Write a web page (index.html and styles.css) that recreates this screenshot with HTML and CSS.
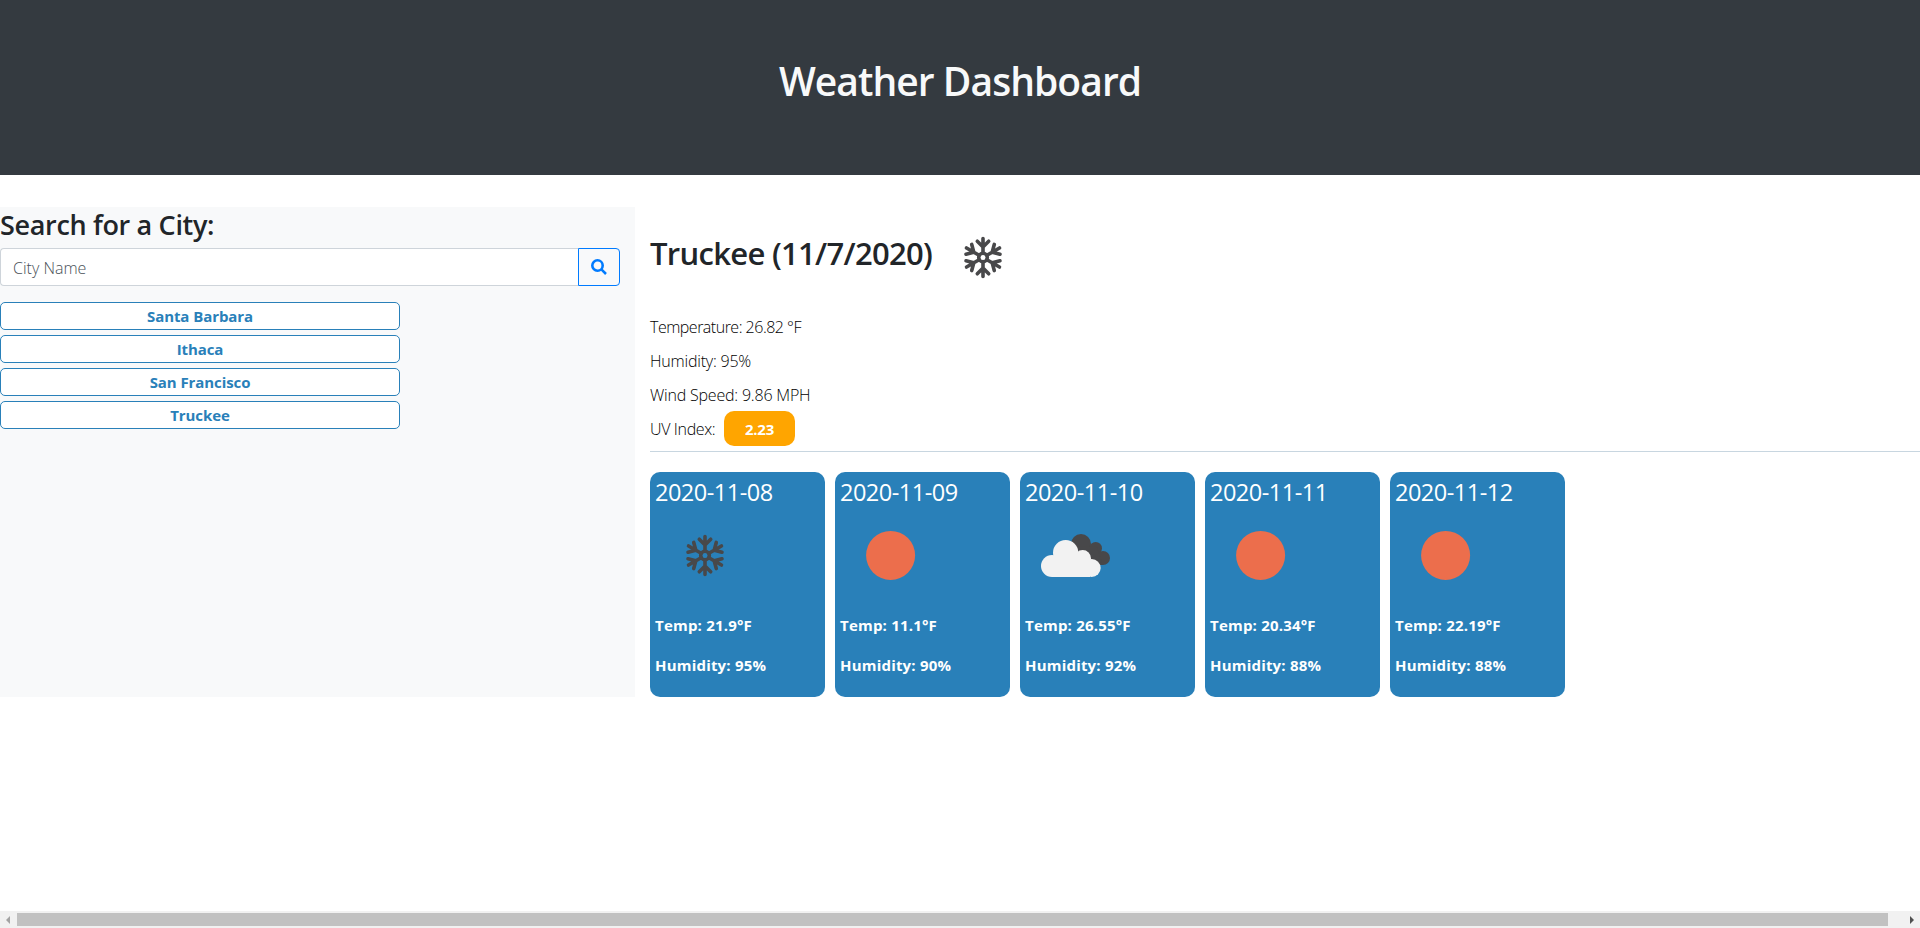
FILE: index.html
```html
<!DOCTYPE html>
<html lang="en"><head><meta charset="utf-8"><title>Weather Dashboard</title><link rel="stylesheet" href="styles.css"></head>
<body>
<svg class="defs" width="0" height="0" aria-hidden="true">
  <symbol id="snow" viewBox="0 0 100 100">
    <g fill="none" stroke="#48484a" stroke-width="3.6" stroke-linecap="round">
      <circle cx="50" cy="50.5" r="4.3"/>
      <g id="arm"><path d="M50 46V31.5M44.3 34.2L50 39.9L55.7 34.2"/></g>
      <use href="#arm" transform="rotate(60 50 50.5)"/><use href="#arm" transform="rotate(120 50 50.5)"/><use href="#arm" transform="rotate(180 50 50.5)"/><use href="#arm" transform="rotate(240 50 50.5)"/><use href="#arm" transform="rotate(300 50 50.5)"/>
    </g>
  </symbol>
  <symbol id="sun" viewBox="0 0 100 100"><circle cx="50.6" cy="50.4" r="24.5" fill="#ec6e4c"/></symbol>
  <symbol id="cloud" viewBox="45 135 300 300">
    <g fill="#48484a"><circle cx="213" cy="252" r="30"/><circle cx="257" cy="265" r="19"/><circle cx="279" cy="294" r="21"/><path d="M200 260H260L279 315H230Z"/></g>
    <g fill="#f2f2f2"><circle cx="126" cy="318" r="33"/><circle cx="167" cy="278" r="38"/><circle cx="218" cy="295" r="25"/><circle cx="245" cy="324" r="27"/><path d="M126 290H240V351H126Z"/></g>
  </symbol>
</svg>
<header class="banner"><h1>Weather Dashboard</h1></header>
<main class="content">
  <aside class="search">
    <h3>Search for a City:</h3>
    <form class="search-row"><input class="city-input" placeholder="City Name"><button class="search-btn" type="button" aria-label="Search"><svg width="16" height="16" viewBox="0 0 16 16" fill="none" stroke="#007bff"><circle cx="6.5" cy="6.5" r="5.2" stroke-width="2.6"/><path d="M10.4 10.4L15 15" stroke-width="2.5"/></svg></button></form>
    <div class="history"><button>Santa Barbara</button><button>Ithaca</button><button>San Francisco</button><button>Truckee</button></div>
  </aside>
  <section class="weather">
    <div class="current"><h2>Truckee (11/7/2020)</h2><svg class="icon"><use href="#snow"/></svg></div>
    <div class="facts"><p class="temperature">Temperature: 26.82 °F</p><p>Humidity: 95%</p><p>Wind Speed: 9.86 MPH</p><p><span class="uv-label">UV Index:</span><b class="uv">2.23</b></p></div>
    <div class="forecast">
      <article><h4>2020-11-08</h4><svg class="icon"><use href="#snow"/></svg><p>Temp: 21.9°F</p><p>Humidity: 95%</p></article>
      <article><h4>2020-11-09</h4><svg class="icon"><use href="#sun"/></svg><p>Temp: 11.1°F</p><p>Humidity: 90%</p></article>
      <article><h4>2020-11-10</h4><svg class="icon"><use href="#cloud"/></svg><p>Temp: 26.55°F</p><p>Humidity: 92%</p></article>
      <article><h4>2020-11-11</h4><svg class="icon"><use href="#sun"/></svg><p>Temp: 20.34°F</p><p>Humidity: 88%</p></article>
      <article><h4>2020-11-12</h4><svg class="icon"><use href="#sun"/></svg><p>Temp: 22.19°F</p><p>Humidity: 88%</p></article>
    </div>
  </section>
</main>
<footer class="scrollbar"><i class="arrow left"></i><i class="thumb"></i><i class="arrow right"></i></footer>
</body></html>
```
FILE: styles.css
```css
* { box-sizing: border-box; margin: 0; }
body { height: 928px; display: flex; flex-direction: column; overflow: hidden; background: #fff; color: #212529; font: 400 15px/24px "Open Sans", "Noto Sans", sans-serif; white-space: nowrap; }
.defs { position: absolute; }
.banner { height: 175px; padding-top: 57px; background: #343a40; color: #f8f9fa; text-align: center; }
h1, h2, h3 { font-weight: 600; }
h1 { font-size: 39px; line-height: 48px; letter-spacing: -0.95px; }
.content { display: flex; gap: 15px; height: 490px; margin-top: 32px; }
.search { width: 635px; flex: none; background: #f8f9fa; }
h3 { font-size: 27px; line-height: 33px; padding: 1px 0 7px; letter-spacing: -0.33px; }
.search-row { display: flex; width: 620px; height: 38px; }
.city-input { flex: 1; padding: 2px 12px 0; border: 1px solid #ced4da; border-right: 0; border-radius: 4px 0 0 4px; font: 300 16px "Open Sans", sans-serif; background: #fff; }
.city-input::placeholder { color: #495057; opacity: 1; }
.search-btn { width: 42px; padding: 0; border: 1px solid #007bff; border-radius: 0 4px 4px 0; background: #f8f9fa; }
.search-btn svg { display: block; margin: 0 0 0 12px; }
.history { display: flex; flex-direction: column; gap: 5px; width: 400px; margin-top: 16px; }
.history button { height: 28px; padding: 0; border: 1px solid #2980b9; border-radius: 5px; background: #fff; color: #2980b9; font: 700 15px/26px "Open Sans", sans-serif; letter-spacing: -0.08px; }
.weather { flex: 1; }
.current { display: flex; height: 100px; }
h2 { width: 283px; font-size: 31px; line-height: 38px; padding-top: 27px; letter-spacing: -0.7px; }
.icon { display: block; width: 100px; height: 100px; }
.facts { height: 145px; padding-top: 4px; border-bottom: 1px solid #c8d6e0; color: #000; font-size: 16px; font-weight: 300; letter-spacing: -0.2px; }
.temperature { letter-spacing: -0.5px; }
.facts p { height: 34px; line-height: 33px; display: flex; }
.uv-label { width: 74px; letter-spacing: -0.35px; }
.uv { width: 71px; height: 35px; margin-top: -2px; line-height: 37px; border-radius: 10px; background: orange; color: #fff; font-size: 15px; font-weight: 700; text-align: center; }
.forecast { display: flex; gap: 10px; margin-top: 20px; }
.forecast article { width: 175px; height: 225px; padding: 5px; border-radius: 10px; background: #2980b9; color: #fff; font-weight: 700; }
h4 { height: 29px; font-size: 23.5px; line-height: 31px; font-weight: 500; letter-spacing: -0.5px; }
.forecast p { padding-bottom: 16px; letter-spacing: 0.2px; }
.forecast .icon { margin: -1px 0 8px; }
.scrollbar { display: flex; align-items: center; height: 17px; margin-top: auto; background: #f1f1f1; }
.thumb { width: 1871px; height: 13px; background: #c1c1c1; }
.arrow { border: solid transparent; border-width: 4px 0; }
.left { border-right: 4px solid #a3a3a3; margin: 0 7px 0 6px; }
.right { border-left: 4px solid #505050; margin-left: 22px; }
```
